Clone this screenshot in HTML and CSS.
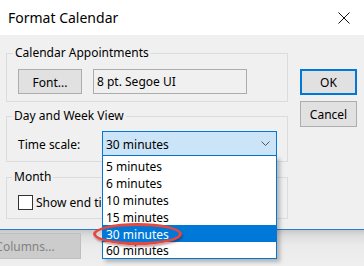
FILE: index.html
```html
<!DOCTYPE html>
<html>
<head>
<meta charset="utf-8">
<link rel="stylesheet" href="styles.css">
</head>
<body>
<div class="titlebar">
  <span class="title">Format Calendar</span>
  <svg class="close" width="12" height="12" viewBox="0 0 12 12"><path d="M0.5 0.5 L11.5 11.5 M11.5 0.5 L0.5 11.5" stroke="#111" stroke-width="1" fill="none"/></svg>
</div>
<div class="dialog">
  <div class="groups">
    <fieldset class="group g1">
      <legend>Calendar Appointments</legend>
      <div class="row">
        <button class="btn font-btn">Font...</button>
        <div class="textbox">8 pt. Segoe UI</div>
      </div>
    </fieldset>
    <fieldset class="group g2">
      <legend>Day and Week View</legend>
      <div class="row">
        <span class="label">Time scale:</span>
        <div class="combo-wrap">
          <div class="combo">
            <span class="combo-text">30 minutes</span>
            <svg class="chev" width="9" height="5" viewBox="0 0 9 5"><path d="M0.5 0.5 L4.5 4.5 L8.5 0.5" stroke="#555" stroke-width="1" fill="none"/></svg>
          </div>
          <ul class="list">
            <li>5 minutes</li>
            <li>6 minutes</li>
            <li>10 minutes</li>
            <li>15 minutes</li>
            <li class="sel">30 minutes</li>
            <li class="last">60 minutes</li>
          </ul>
          <div class="ring"></div>
        </div>
      </div>
    </fieldset>
    <fieldset class="group g3">
      <legend>Month</legend>
      <div class="row">
        <span class="checkbox"></span>
        <span class="cbtext">Show end time</span>
      </div>
    </fieldset>
  </div>
  <div class="buttons">
    <button class="btn ok">OK</button>
    <button class="btn">Cancel</button>
  </div>
</div>
<div class="below">
  <button class="btn disabled">Columns...</button>
</div>
</body>
</html>
```
FILE: styles.css
```css
* { box-sizing: border-box; }
body {
  margin: 0;
  width: 364px;
  height: 266px;
  overflow: hidden;
  background: #f0f0f0;
  font-family: "Segoe UI", "Noto Sans", "Open Sans", sans-serif;
  font-size: 12px;
  color: #000;
}
.titlebar {
  height: 35px;
  background: #fff;
  display: flex;
  align-items: center;
  justify-content: space-between;
  padding: 0 14px 0 8px;
}
.title { font-size: 14px; padding-bottom: 1px; }
.close { display: block; }

.dialog {
  height: 195px;
  border-bottom: 1px solid #2b7bd1;
  display: flex;
  padding-left: 6px;
  gap: 12px;
}
.groups { width: 282px; padding-top: 10px; }
.group {
  margin: 0;
  border: 1px solid #dcdcdc;
  min-width: 0;
}
.group legend {
  padding: 0 2px;
  margin-left: -5px;
  line-height: 16px;
}
.g1 { padding: 8px 10px 7px 11px; }
.g2 { margin-top: 6px; padding: 7px 10px 5px 10px; }
.g3 { margin-top: 7px; padding: 8px 10px 7px 10px; }
.row { display: flex; align-items: center; }

.btn {
  font: inherit;
  color: #000;
  background: #e1e1e1;
  border: 1px solid #adadad;
  padding: 0;
  margin: 0;
}
.font-btn { width: 64px; height: 25px; padding-top: 1px; }
.textbox {
  margin-left: 11px;
  width: 154px;
  height: 25px;
  border: 1px solid #acacac;
  background: #f0f0f0;
  padding: 1px 0 0 3px;
  line-height: 22px;
}
.label { width: 85px; padding: 2px 0 0 1px; }
.combo-wrap { position: relative; z-index: 10; }
.combo {
  width: 175px;
  height: 25px;
  border: 1px solid #0078d7;
  background: #cce4f7;
  display: flex;
  align-items: center;
  justify-content: space-between;
  padding: 0 6px 0 3px;
}
.combo-text { padding-top: 2px; }
.chev { display: block; }
.list {
  position: absolute;
  left: 0;
  top: 25px;
  width: 175px;
  margin: 0;
  padding: 1px 0 0;
  list-style: none;
  background: #fff;
  border: 1px solid #0078d7;
  border-top: none;
  box-shadow: 3px 3px 4px rgba(0, 0, 0, 0.25);
}
.list li {
  line-height: 15px;
  padding: 2px 0 0 3px;
}
.list li.last { line-height: 14px; }
.list li.sel { background: #0078d7; color: #fff; }
.ring {
  position: absolute;
  left: -9px;
  top: 92px;
  width: 89px;
  height: 22px;
  border: 3px solid #e4483f;
  border-radius: 50%;
  box-shadow: 1px 2px 2px rgba(80, 0, 0, 0.35);
}
.checkbox {
  width: 15px;
  height: 15px;
  border: 1px solid #333;
  background: #fff;
  margin-left: 1px;
}
.cbtext {
  margin-left: 3px;
  line-height: 17px;
  padding-top: 1px;
  white-space: nowrap;
  width: 65px;
  overflow: hidden;
}

.buttons {
  padding-top: 34px;
  display: flex;
  flex-direction: column;
  gap: 6px;
}
.buttons .btn { width: 57px; height: 26px; padding-top: 1px; }
.buttons .ok { border: 2px solid #0078d7; }

.below {
  height: 36px;
  background: linear-gradient(#c8c8c8, #dedede 6px, #ebebeb 16px, #efefef);
  padding-top: 3px;
}
.disabled {
  margin-left: -19px;
  width: 100px;
  height: 26px;
  padding: 1px 12px 0 0;
  background: #cccccc;
  border-color: #bfbfbf;
  color: #838383;
}
```
